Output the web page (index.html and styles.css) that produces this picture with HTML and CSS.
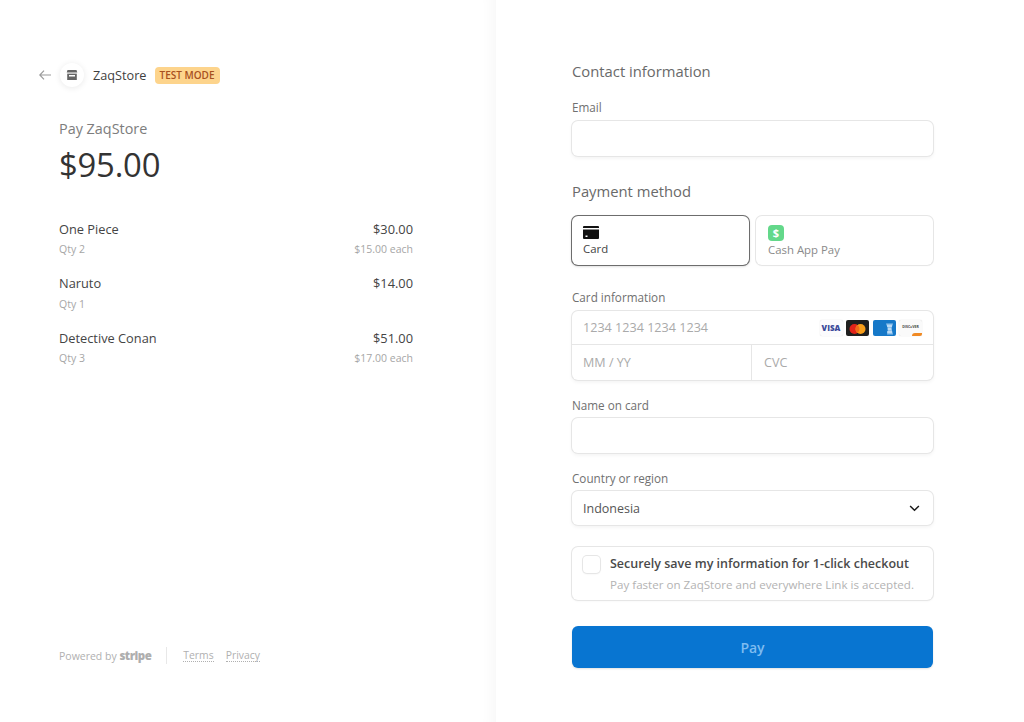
FILE: index.html
```html
<!DOCTYPE html>
<html lang="en">
<head>
<meta charset="utf-8">
<title>Pay ZaqStore</title>
<link rel="stylesheet" href="styles.css">
</head>
<body>
<div class="page">
  <aside class="summary">
    <header class="brand">
      <svg class="back" viewBox="0 0 12 10" width="12" height="10"><path d="M5 .7 .8 5 5 9.3M.8 5H12" fill="none" stroke="#9a9a9a" stroke-width="1.2"/></svg>
      <span class="logo"><svg viewBox="0 0 12 12" width="12" height="12"><path d="M1.5 1h9l.8 2.6H.7z" fill="#666"/><path d="M1.2 4.6h9.6V11H1.2z" fill="#666"/><path d="M3 6h6v1.5H3z" fill="#fff"/></svg></span>
      <span class="store">ZaqStore</span>
      <span class="badge">TEST MODE</span>
    </header>
    <div class="pay-label">Pay ZaqStore</div>
    <div class="amount">$95.00</div>
    <ul class="items">
      <li class="item">
        <div class="row"><span>One Piece</span><span>$30.00</span></div>
        <div class="row sub"><span>Qty 2</span><span>$15.00 each</span></div>
      </li>
      <li class="item">
        <div class="row"><span>Naruto</span><span>$14.00</span></div>
        <div class="row sub"><span>Qty 1</span></div>
      </li>
      <li class="item">
        <div class="row"><span>Detective Conan</span><span>$51.00</span></div>
        <div class="row sub"><span>Qty 3</span><span>$17.00 each</span></div>
      </li>
    </ul>
    <footer class="foot">
      <span class="powered">Powered by <b>stripe</b></span>
      <span class="sep"></span>
      <span class="link">Terms</span>
      <span class="link">Privacy</span>
    </footer>
  </aside>
  <main class="checkout">
    <h2 class="heading">Contact information</h2>
    <label class="label">Email</label>
    <div class="input"></div>
    <h2 class="heading pm">Payment method</h2>
    <div class="methods">
      <div class="method active">
        <svg viewBox="0 0 16 13" width="16" height="13"><path d="M0 1a1 1 0 0 1 1-1h14a1 1 0 0 1 1 1v1H0z" fill="#111"/><path d="M0 3.6h16V12a1 1 0 0 1-1 1H1a1 1 0 0 1-1-1z" fill="#111"/><path d="M2.5 9.5h2V11h-2z" fill="#fff"/></svg>
        <span>Card</span>
      </div>
      <div class="method">
        <span class="cash">$</span>
        <span>Cash App Pay</span>
      </div>
    </div>
    <label class="label info">Card information</label>
    <div class="card">
      <div class="card-num">
        <span class="ph">1234 1234 1234 1234</span>
        <span class="brands">
          <i class="cc visa">VISA</i>
          <i class="cc mc"><svg viewBox="0 0 23 16" width="23" height="16"><circle cx="8.5" cy="8" r="5" fill="#e2231a"/><circle cx="14.5" cy="8" r="5" fill="#f79e1b"/><path d="M11.5 4a5 5 0 0 1 0 8 5 5 0 0 1 0-8z" fill="#f26a1b"/></svg></i>
          <i class="cc amex"><svg viewBox="0 0 23 16" width="23" height="16"><path d="M13 2.500h7l-1.500 5 1.500 6h-6l1-5.500z" fill="#8fc2ec"/><path d="M14 5h5M14.500 8h4M14 11h5" stroke="#e6f1fb" stroke-width="1"/></svg></i>
          <i class="cc disc"><span>DISC●VER</span></i>
        </span>
      </div>
      <div class="card-split">
        <div class="ph half">MM / YY</div>
        <div class="ph half">CVC</div>
      </div>
    </div>
    <label class="label name">Name on card</label>
    <div class="input"></div>
    <label class="label country">Country or region</label>
    <div class="input select">
      <span>Indonesia</span>
      <svg viewBox="0 0 12 8" width="11" height="7"><path d="M1 1.200 6 6l5-4.800" fill="none" stroke="#1a1a1a" stroke-width="1.700"/></svg>
    </div>
    <div class="save">
      <span class="check"></span>
      <div>
        <div class="save-title">Securely save my information for 1-click checkout</div>
        <div class="save-sub">Pay faster on ZaqStore and everywhere Link is accepted.</div>
      </div>
    </div>
    <button class="pay" type="button">Pay</button>
  </main>
</div>
</body>
</html>
```
FILE: styles.css
```css
* { box-sizing: border-box; }
html, body { margin: 0; padding: 0; background: #fff; }
body { font-family: "Open Sans", "Noto Sans", sans-serif; color: #3c4043; }
.page { display: flex; width: 1024px; height: 722px; overflow: hidden; }

.summary {
  width: 496px; height: 722px; padding: 63px 83px 0 39px;
  display: flex; flex-direction: column;
  box-shadow: inset -16px 0 14px -12px rgba(0,0,0,.035);
}
.brand { display: flex; align-items: center; height: 24px; }
.back { margin-right: 9px; }
.logo {
  width: 24px; height: 24px; border-radius: 50%; background: #fff;
  box-shadow: 0 1px 6px rgba(0,0,0,.09);
  display: flex; align-items: center; justify-content: center;
}
.store { margin-left: 9px; font-size: 12.7px; font-weight: 500; color: #3f3f3f; }
.badge {
  margin-left: 8px; height: 17px; width: 65px; background: #fdd48c; border-radius: 4px;
  color: #a8501e; font-size: 10px; font-weight: 600; text-align: center; line-height: 17px;
  white-space: nowrap;
}
.pay-label { margin: 32px 0 0 20px; font-size: 14.4px; line-height: 20px; color: #7d7d7d; font-weight: 500; }
.amount { margin: 7px 0 0 20px; font-size: 32.8px; line-height: 38px; color: #333; font-weight: 500; letter-spacing: -.2px; }
.items { list-style: none; margin: 35.7px 0 0 20px; padding: 0; }
.item { height: 54.5px; }
.row { display: flex; justify-content: space-between; font-size: 12.8px; line-height: 18px; color: #444; }
.row.sub { margin-top: 4.6px; font-size: 10.5px; line-height: 15px; color: #a6a6a6; }
.foot { margin: auto 0 58px 20px; display: flex; align-items: center; font-size: 10.5px; color: #b0b0b0; height: 18px; }
.powered b { font-size: 11.5px; font-weight: 800; letter-spacing: -.5px; color: #aeaeae; }
.sep { width: 1px; height: 17px; background: #e8e8e8; margin: 0 16px 0 15px; }
.link { margin-right: 12px; font-size: 10.4px; border-bottom: 1px dotted #b0b0b0; line-height: 12px; }

.checkout { width: 362px; margin-left: 76px; padding-top: 61px; }
.heading { margin: 0; font-size: 14.8px; line-height: 20px; font-weight: 500; color: #6a6a6a; }
.heading.pm { margin-top: 25px; }
.label { display: block; margin: 18px 0 6px; font-size: 11.7px; line-height: 16px; font-weight: 500; color: #707070; }
.label.info { margin-top: 24px; }
.label.name, .label.country { margin-top: 17px; margin-bottom: 5px; }
.input {
  height: 35px; width: 361px; border-radius: 6px; background: #fff;
  box-shadow: 0 0 0 1px #e6e6e6, 0 2px 4px rgba(0,0,0,.06);
}
.select {
  height: 34px;
  display: flex; align-items: center; justify-content: space-between; padding: 0 13px 0 11px;
  font-size: 12.5px; color: #555;
}
.methods { display: flex; gap: 7px; width: 361px; margin-top: 15px; }
.method {
  width: 177px; height: 49px; border-radius: 6px; padding: 10px 11px 0;
  box-shadow: 0 0 0 1px #e6e6e6, 0 1px 2px rgba(0,0,0,.04);
  display: flex; flex-direction: column; align-items: flex-start; gap: 2px;
  font-size: 11.4px; line-height: 15px; color: #8a8a8a;
}
.method svg { display: block; }
.method.active { color: #444; box-shadow: 0 0 0 1px #6d6d6d, 0 1px 3px rgba(0,0,0,.25); }
.method .cash {
  width: 16px; height: 16px; border-radius: 4px; background: #63d88a; color: #fff;
  font-size: 11px; font-weight: 700; line-height: 16px; text-align: center; margin-top: -1px;
}
.method + .method { gap: 1px; padding-left: 12px; }
.card {
  height: 69px; width: 361px; border-radius: 6px;
  box-shadow: 0 0 0 1px #e6e6e6, 0 2px 4px rgba(0,0,0,.06);
}
.card-num { height: 34px; display: flex; align-items: center; justify-content: space-between; padding: 0 11px; border-bottom: 1px solid #e6e6e6; }
.ph { font-size: 12.6px; color: #aaa; }
.brands { display: flex; gap: 3.5px; }
.cc { width: 23px; height: 16px; border-radius: 2px; display: block; font-style: normal; overflow: hidden; }
.visa { background: #fbfbfd; color: #3b4a9a; font-size: 8px; font-weight: 800; line-height: 16px; text-align: center; box-shadow: 0 0 1px #ccc; }
.mc { background: #1f1f1f; }
.amex { background: #1678c8; }
.disc { background: #fafafa; box-shadow: 0 0 1px #ccc; position: relative; font-size: 3.5px; font-weight: 700; line-height: 13px; text-align: center; color: #444; white-space: nowrap; }
.disc::after { content: ""; position: absolute; right: 0; bottom: 0; width: 10px; height: 3px; background: #f08a24; border-radius: 4px 0 0 0; }
.card-split { display: flex; height: 35px; }
.half { width: 179px; padding: 0 11px; line-height: 35px; }
.half + .half { width: 182px; border-left: 1px solid #e6e6e6; padding-left: 12px; }
.save {
  display: flex; gap: 10px; width: 361px; margin-top: 22px; height: 53px; padding: 8px 11px; border-radius: 6px;
  box-shadow: 0 0 0 1px #e6e6e6, 0 1px 3px rgba(0,0,0,.05);
}
.check { flex: none; width: 17px; height: 17px; margin-top: 1px; border-radius: 4px; box-shadow: 0 0 0 1px #e6e6e6, 0 1px 2px rgba(0,0,0,.08); }
.save-title { font-size: 12.5px; line-height: 17px; font-weight: 600; color: #4a4a4a; white-space: nowrap; }
.save-sub { margin-top: 5px; font-size: 11.6px; line-height: 16px; color: #b3b3b3; white-space: nowrap; }
.pay {
  display: block; width: 361px; height: 42px; margin-top: 26px; border: 0; border-radius: 6px;
  background: #0875d1; color: #7ebcf0; font: 600 14px/42px "Open Sans", "Noto Sans", sans-serif;
  box-shadow: 0 1px 2px rgba(0,0,0,.12);
}
```
